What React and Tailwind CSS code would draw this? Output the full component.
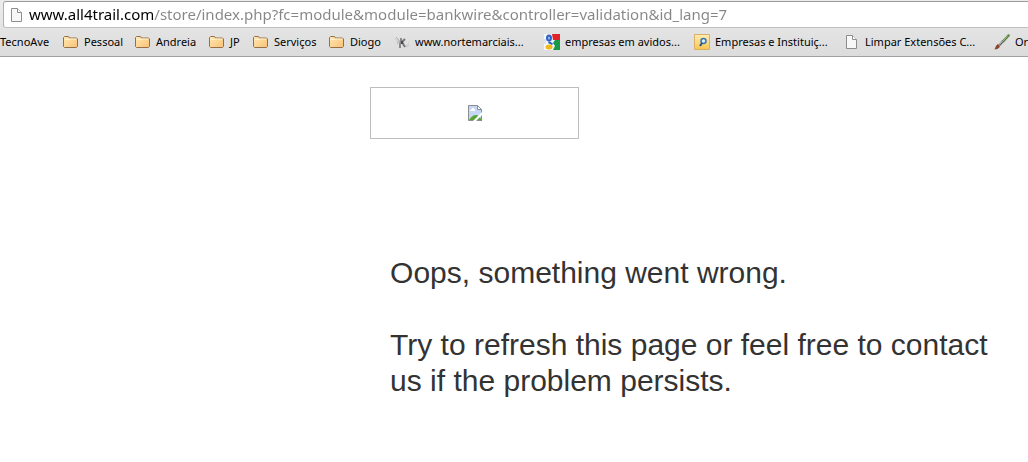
import React from "react";

function PageIcon() {
  return (
    <svg width="16" height="16" viewBox="0 0 16 16" className="shrink-0" aria-hidden="true">
      <path d="M2.5 1.5h6l4 4v9h-10z" fill="#f8f8f8" stroke="#8d8d8d" />
      <path d="M8.5 1.5v4h4" fill="#fff" stroke="#8d8d8d" />
    </svg>
  );
}

function FolderIcon() {
  return (
    <svg width="16" height="16" viewBox="0 0 16 16" className="shrink-0" aria-hidden="true">
      <defs>
        <linearGradient id="folder" x1="0" y1="0" x2="1" y2="1">
          <stop offset="0" stopColor="#ffe9b4" />
          <stop offset="1" stopColor="#f9c174" />
        </linearGradient>
      </defs>
      <path d="M.5 12.5v-9l1-1h4l1 1.500h7l1 1v7.500l-1 1h-12z" fill="url(#folder)" stroke="#94704a" />
      <path d="M1.500 5.500H6l1-.5h6.500" fill="none" stroke="#fff0cc" />
    </svg>
  );
}

function KickIcon() {
  return (
    <svg width="16" height="16" viewBox="0 0 16 16" className="shrink-0" aria-hidden="true">
      <path d="M0 4l4 1 2 3-2 1zM11 12l3-2 1-4v6l-3 2z" fill="#cfcfcf" />
      <path d="M2 3l3 3 2 3M3 10l2-3" fill="none" stroke="#b4b4b4" />
      <path d="M7 4v3l-1 3v4" fill="none" stroke="#8a8a8a" strokeWidth="2" />
      <path d="M11 5L8 8l3 5" fill="none" stroke="#777" strokeWidth="2" />
      <path d="M7 7h2v3H7z" fill="#4a4a4a" />
    </svg>
  );
}

function GoogleIcon() {
  return (
    <svg width="16" height="16" viewBox="0 0 16 16" className="shrink-0" aria-hidden="true">
      <path d="M0 0h16v16H0z" fill="#f6f7fa" />
      <path d="M8 0h8v6H9z" fill="#e1242a" />
      <path d="M11 6h5v10H9l2-4-2-3z" fill="#169a46" />
      <path d="M0 5h2v5H0z" fill="#dbe3f2" />
      <ellipse cx="5" cy="4" rx="3" ry="3.500" fill="#2c63c4" />
      <ellipse cx="5" cy="4" rx="1" ry="1.500" fill="#9dbbec" />
      <path d="M5 7l4 2.500-1 1.500-4-2z" fill="#2c63c4" />
      <ellipse cx="5" cy="13" rx="3.500" ry="2.500" fill="#f5b81c" />
    </svg>
  );
}

function SearchIcon() {
  return (
    <svg width="16" height="16" viewBox="0 0 16 16" className="shrink-0" aria-hidden="true">
      <defs>
        <linearGradient id="tile" x1="0" y1="0" x2="0" y2="1">
          <stop offset="0" stopColor="#ffedb4" />
          <stop offset="1" stopColor="#f9c64e" />
        </linearGradient>
      </defs>
      <path d="M.5.5h15v15H.5z" fill="url(#tile)" stroke="#dcae67" />
      <circle cx="9.500" cy="7" r="2.500" fill="#d9edfa" stroke="#3975b4" strokeWidth="1.500" />
      <path d="M8 9l-2 3" stroke="#24578f" strokeWidth="2" />
    </svg>
  );
}

function BrushIcon() {
  return (
    <svg width="16" height="16" viewBox="0 0 16 16" className="shrink-0" aria-hidden="true">
      <path d="M14.500 1.500L9 7.500" stroke="#55773a" strokeWidth="2.500" strokeLinecap="round" />
      <path d="M14 1.500L8.500 7.500" stroke="#9fcb74" />
      <path d="M9 7L5.500 11" stroke="#666" strokeWidth="2.500" />
      <path d="M8.500 7L5 10.500" stroke="#e5e5e5" />
      <path d="M4 10l2 2c-1 3-3 3-5.500 3.500C1.500 13 2 11 4 10z" fill="#8a4630" />
    </svg>
  );
}

function BrokenImageIcon() {
  return (
    <svg width="14" height="16" viewBox="0 0 14 16" role="img" aria-label="Store logo">
      <path d="M.5.500h9l4 4v11H.5z" fill="#c4d7f5" stroke="#8e8e8e" />
      <path d="M2 5h1V4h1V3h2v1h1v2H2z" fill="#fff" />
      <path d="M1 15c2-3 4-5 7-5 2 0 4 2 5 4v1z" fill="#55a633" />
      <path d="M9.500.500v4h4z" fill="#fff" stroke="#8e8e8e" />
      <path d="M14 7v3l-6 6H5l3-3 3-3z" fill="#fff" />
      <path d="M14 12v4h-4z" fill="#55a633" />
      <path d="M13.500 11v4.500H10" fill="none" stroke="#8e8e8e" />
    </svg>
  );
}

const bookmarks = [
  { label: "TecnoAve", Icon: null, width: "w-[63px]" },
  { label: "Pessoal", Icon: FolderIcon, width: "w-[72px]" },
  { label: "Andreia", Icon: FolderIcon, width: "w-[74px]" },
  { label: "JP", Icon: FolderIcon, width: "w-[44px]" },
  { label: "Serviços", Icon: FolderIcon, width: "w-[76px]" },
  { label: "Diogo", Icon: FolderIcon, width: "w-[65px]" },
  { label: "www.nortemarciais...", Icon: KickIcon, width: "w-[150px]" },
  { label: "empresas em avidos...", Icon: GoogleIcon, width: "w-[150px]" },
  { label: "Empresas e Instituiç...", Icon: SearchIcon, width: "w-[150px]" },
  { label: "Limpar Extensões C...", Icon: PageIcon, width: "w-[150px]" },
  { label: "Or", Icon: BrushIcon, width: "w-[60px]" },
];

export default function App() {
  return (
    <div className="min-h-screen overflow-x-hidden bg-white">
      <header className="border-b border-[#a0a0a0] bg-linear-to-b from-[#ececec] to-[#dcdcdc] font-['Noto_Sans',sans-serif]">
        <div className="pt-px pl-[3px]">
          <div className="flex h-[27px] items-center gap-1 rounded-l-[3px] border border-r-0 border-t-[#9c9c9c] border-b-[#c0c0c0] border-l-[#b0b0b0] bg-white pl-[5px]">
            <PageIcon />
            <input
              type="text"
              aria-label="Address"
              spellCheck={false}
              defaultValue="www.all4trail.com/store/index.php?fc=module&module=bankwire&controller=validation&id_lang=7"
              className="min-w-0 flex-1 bg-linear-to-r from-black from-[124px] to-[#868686] to-[124px] bg-clip-text pb-0.5 text-[15px] leading-[22px] text-transparent outline-none"
            />
          </div>
        </div>
        <nav aria-label="Bookmarks" className="flex h-7 items-center overflow-hidden">
          {bookmarks.map(({ label, Icon, width }) => (
            <a
              key={label}
              href="#"
              className={`flex shrink-0 items-center gap-[5px] text-[11px] leading-4 whitespace-nowrap text-black ${width}`}
            >
              {Icon && <Icon />}
              {label}
            </a>
          ))}
        </nav>
      </header>
      <main className="pt-[30px] pl-[36%] font-['Liberation_Sans',sans-serif]">
        <div className="flex h-[52px] w-[209px] items-center justify-center border border-[#bdbdbd]">
          <BrokenImageIcon />
        </div>
        <div className="max-w-[640px] px-5 pt-[116px] text-[30px] leading-9 text-[#333]">
          <p>Oops, something went wrong.</p>
          <p className="pt-9">Try to refresh this page or feel free to contact us if the problem persists.</p>
        </div>
      </main>
    </div>
  );
}
